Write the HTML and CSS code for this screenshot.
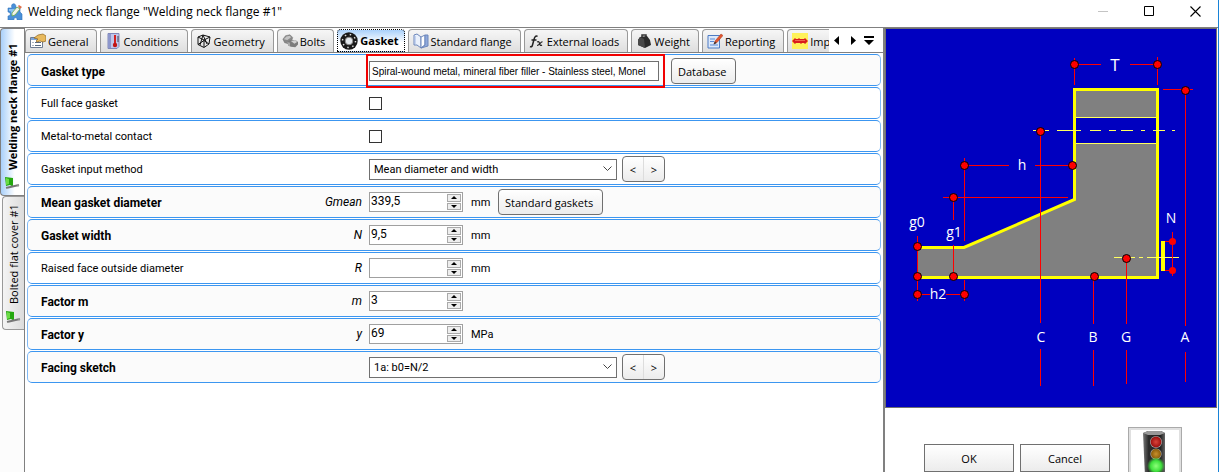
FILE: index.html
```html
<!DOCTYPE html>
<html lang="en">
<head>
    <meta charset="UTF-8">
    <meta name="viewport" content="width=device-width, initial-scale=1.0">
    <title>Welding neck flange</title>
    <link rel="stylesheet" href="styles.css">
</head>
<body>
<div class="window">

    <header class="titlebar">
        <svg class="app-icon" viewBox="0 0 16 17">
            <path d="M1 5h4c-2-5 4-6 4-1v1h4v4l2 2v6h-5c1-3-4-3-3 0H1v-4c3 0 3-4 0-4z" fill="#4a90d8" stroke="#2f74bd" stroke-width=".6"/>
            <path d="M2 6h9l-2 5-4 1c-1-2 0-4-3-4z" fill="#8cc2f2"/>
            <path d="M5 10l5-6 3 2-5 6-3 1z" fill="#f3f3e8" stroke="#6aa84a" stroke-width=".8"/>
            <path d="M11 3l1-1 3 2-2 2z" fill="#e0704a"/>
        </svg>
        <span class="title">Welding neck flange "Welding neck flange #1"</span>
        <div class="window-buttons">
            <button class="win-btn" aria-label="Minimize" disabled><svg viewBox="0 0 11 11"><path d="M0 5.500h10" stroke="#c4c4c4"/></svg></button>
            <button class="win-btn" aria-label="Maximize"><svg viewBox="0 0 11 11"><path d="M.5.5h9v9h-9z" fill="none" stroke="#000"/></svg></button>
            <button class="win-btn" aria-label="Close"><svg viewBox="0 0 11 11"><path d="M.5.5l10 10M10.500.5l-10 10" stroke="#000" stroke-width="1.100"/></svg></button>
        </div>
    </header>

    <main class="main">
        <nav class="side-tabs">
            <button class="side-tab active">
                <svg class="flag" viewBox="0 0 16 14"><path d="M1 1l8 1v9l-3-2-4 1z" fill="#25a80f"/><path d="M2 2l3 1v5l-3 1z" fill="#6bdc45"/><path d="M2 12l13-3" stroke="#777" stroke-width="1.800"/><path d="M3 12v1M14 8v3" stroke="#aaa"/></svg>
                <span>Welding neck flange #1</span>
            </button>
            <button class="side-tab">
                <svg class="flag" viewBox="0 0 16 14"><path d="M1 1l8 1v9l-3-2-4 1z" fill="#25a80f"/><path d="M2 2l3 1v5l-3 1z" fill="#6bdc45"/><path d="M2 12l13-3" stroke="#777" stroke-width="1.800"/><path d="M3 12v1M14 8v3" stroke="#aaa"/></svg>
                <span>Bolted flat cover #1</span>
            </button>
        </nav>

        <section class="editor">
            <div class="tab-bar">
                <div class="tabs">
                    <button class="tab">
                        <svg viewBox="0 0 16 16"><path d="M.5 4.500h12v10H.5z" fill="#fff" stroke="#6d7c93"/><path d="M1 5h11v2H1z" fill="#7ea6da"/><path d="M2.500 9.500h1M2.500 12.500h1M5 9.500h6M5 12.500h6" stroke="#5a6a80"/><path d="M4 5l4-3 5-1 3 2v5l-3 1-3-1-3 1-1-1 2-2z" fill="#e8b95c" stroke="#8d6420" stroke-width=".7"/></svg>
                        General
                    </button>
                    <button class="tab">
                        <svg viewBox="0 0 16 16"><path d="M3 .5h11v13l-2 2H3z" fill="#bfc6ea" stroke="#8088b8"/><path d="M3 1h3v14H3z" fill="#8d97cc"/><path d="M9 2h2v12H9z" fill="#d22020"/><circle cx="10" cy="12" r="2.200" fill="#c01515"/><path d="M12 4h2M12 6h2M12 8h2" stroke="#445"/></svg>
                        Conditions
                    </button>
                    <button class="tab">
                        <svg viewBox="0 0 16 16"><path d="M2 4l5-2 7 2-1 7-5 3.500-6-3zM2 4l6 3 6-3M8 7v7M7 2L4 12M2 11.500l6-4 5 3.500M7 2l4 9" fill="none" stroke="#111"/></svg>
                        Geometry
                    </button>
                    <button class="tab">
                        <svg viewBox="0 0 18 16"><path d="M1 6l3-4 5-1 3 3-1 4-4 3-4-1z" fill="#888" stroke="#666" stroke-width=".5"/><path d="M2 6l3-3 4-1 1 2-4 3z" fill="#c4c4c4"/><path d="M6 9l3-2h6l3 2v3l-3 3-5-.5L7 13z" fill="#7c7c7c"/><path d="M10 8l5-1 2 2-3 2z" fill="#d0d0d0"/><path d="M6 9l3 1v4l-2-1z" fill="#aaa"/></svg>
                        Bolts
                    </button>
                    <button class="tab active">
                        <svg class="wide" viewBox="0 0 18 18"><circle cx="9" cy="9" r="8.700" fill="#181818"/><circle cx="9" cy="9" r="6.500" fill="none" stroke="#ddd" stroke-width="1.500" stroke-dasharray="1.500 3.600"/><circle cx="9" cy="9" r="3.800" fill="#e4e9ee" stroke="#888"/></svg>
                        Gasket
                    </button>
                    <button class="tab">
                        <svg viewBox="0 0 16 16"><path d="M1 2l3-1 4 3v11l-4-3H1z" fill="#eaf1fc" stroke="#6d87bb"/><path d="M8 4l4-2v10l-4 3z" fill="#fff" stroke="#6d87bb"/><path d="M12 2h3v11l-7 2 4-3z" fill="#8fa9dc" stroke="#6d87bb"/><path d="M2 3v8" stroke="#9db5e2"/></svg>
                        Standard flange
                    </button>
                    <button class="tab">
                        <svg viewBox="0 0 16 16"><path d="M8.500 3.500C7 2 5.500 4 5 6.500L3.500 12c-.5 2-1.500 2-2.500 1.500M2.500 7h5" fill="none" stroke="#222" stroke-width="1.500"/><path d="M8 9c2-1 2 0 2.500 1.500s1 2.500 2.500 1.500M13.500 9c-2-.5-3 3.500-5.500 3.500" fill="none" stroke="#222" stroke-width="1.200"/></svg>
                        External loads
                    </button>
                    <button class="tab">
                        <svg viewBox="0 0 16 16"><path d="M6 5V2h4v3" fill="none" stroke="#333" stroke-width="1.500"/><path d="M4 4l7-1 3 4 1 5-6 3-7-3 0-5z" fill="#2b2b2b"/><path d="M4 4l4 2 1 9-7-3 0-5z" fill="#484848"/></svg>
                        Weight
                    </button>
                    <button class="tab">
                        <svg viewBox="0 0 16 16"><path d="M1 2.500h11.500V15H1z" fill="#dce9fb" stroke="#4d7bc4"/><path d="M3 6h5M3 8.500h4M3 12h8" stroke="#5b8bd6"/><path d="M7 11l1-3 6-7 2 1.500-6 7z" fill="#e2562f" stroke="#a53617" stroke-width=".5"/><path d="M6.500 11.500l1.500-3 1.500 1.500z" fill="#333"/></svg>
                        Reporting
                    </button>
                    <button class="tab">
                        <svg viewBox="0 0 16 16"><path d="M0 0h16v16H0z" fill="#fff25a"/><path d="M0 8l3-3 1 1h2l1-1 1 1h4l1-1 3 3-3 3-1-1h-2l-1 1-1-1H4l-1 1z" fill="#d91d1d"/><path d="M3 7.500h10" stroke="#f2684c"/></svg>
                        Import
                    </button>
                </div>
                <div class="tab-scroll">
                    <button aria-label="Previous tab"><svg viewBox="0 0 10 10"><path d="M7 0v9L2 4.500z"/></svg></button>
                    <button aria-label="Next tab"><svg viewBox="0 0 10 10"><path d="M3 0v9l5-4.500z"/></svg></button>
                    <button aria-label="All tabs"><svg viewBox="0 0 10 10"><path d="M0 0h10v2H0zM0 4h10L5 9z"/></svg></button>
                </div>
            </div>

            <form class="rows">
                <div class="row required">
                    <label for="type">Gasket type</label>
                    <span class="symbol"></span>
                    <div class="field">
                        <div class="highlight"><input class="text-box" id="type" type="text" value="Spiral-wound metal, mineral fiber filler - Stainless steel, Monel"></div>
                        <button type="button" class="btn">Database</button>
                    </div>
                </div>
                <div class="row">
                    <label for="fullface">Full face gasket</label>
                    <span class="symbol"></span>
                    <div class="field"><input class="check" id="fullface" type="checkbox"></div>
                </div>
                <div class="row">
                    <label for="metal">Metal-to-metal contact</label>
                    <span class="symbol"></span>
                    <div class="field"><input class="check" id="metal" type="checkbox"></div>
                </div>
                <div class="row">
                    <label for="method">Gasket input method</label>
                    <span class="symbol"></span>
                    <div class="field">
                        <select class="combo" id="method"><option>Mean diameter and width</option></select>
                        <div class="pager"><button type="button">&lt;</button><button type="button">&gt;</button></div>
                    </div>
                </div>
                <div class="row required">
                    <label for="gmean">Mean gasket diameter</label>
                    <span class="symbol">Gmean</span>
                    <div class="field">
                        <div class="spin"><input id="gmean" type="text" value="339,5"><div class="arrows"><button type="button" class="up" aria-label="Up"></button><button type="button" class="down" aria-label="Down"></button></div></div>
                        <span class="unit">mm</span>
                        <button type="button" class="btn">Standard gaskets</button>
                    </div>
                </div>
                <div class="row required">
                    <label for="width">Gasket width</label>
                    <span class="symbol">N</span>
                    <div class="field">
                        <div class="spin"><input id="width" type="text" value="9,5"><div class="arrows"><button type="button" class="up" aria-label="Up"></button><button type="button" class="down" aria-label="Down"></button></div></div>
                        <span class="unit">mm</span>
                    </div>
                </div>
                <div class="row">
                    <label for="raised">Raised face outside diameter</label>
                    <span class="symbol">R</span>
                    <div class="field">
                        <div class="spin"><input id="raised" type="text" value=""><div class="arrows"><button type="button" class="up" aria-label="Up"></button><button type="button" class="down" aria-label="Down"></button></div></div>
                        <span class="unit">mm</span>
                    </div>
                </div>
                <div class="row required">
                    <label for="factorm">Factor m</label>
                    <span class="symbol">m</span>
                    <div class="field">
                        <div class="spin"><input id="factorm" type="text" value="3"><div class="arrows"><button type="button" class="up" aria-label="Up"></button><button type="button" class="down" aria-label="Down"></button></div></div>
                    </div>
                </div>
                <div class="row required">
                    <label for="factory">Factor y</label>
                    <span class="symbol">y</span>
                    <div class="field">
                        <div class="spin"><input id="factory" type="text" value="69"><div class="arrows"><button type="button" class="up" aria-label="Up"></button><button type="button" class="down" aria-label="Down"></button></div></div>
                        <span class="unit">MPa</span>
                    </div>
                </div>
                <div class="row required">
                    <label for="sketch">Facing sketch</label>
                    <span class="symbol"></span>
                    <div class="field">
                        <select class="combo" id="sketch"><option>1a: b0=N/2</option></select>
                        <div class="pager"><button type="button">&lt;</button><button type="button">&gt;</button></div>
                    </div>
                </div>
            </form>
        </section>

        <aside class="preview">
            <svg class="drawing" viewBox="886 29 330 378">
                <!-- flange body and bolt hole -->
                <path d="M917 248H964L1074 200V90H1157V277H917z" fill="#808080"/>
                <path d="M1075 118h82v25h-82z" fill="#0000c0"/>
                <path d="M1075 117.500h82M1075 143.500h82" stroke="#ffff60"/>
                <path d="M918 247.500H964L1074.500 199.500V89.500H1157.500V277.500H918" fill="none" stroke="#ff0" stroke-width="3"/>
                <path d="M1161 241h4v30h-4z" fill="#ff0"/>
                <!-- axes -->
                <path d="M1033 130.500h3M1045 130.500h4M1057 130.500h24M1090 130.500h11M1109 130.500h7M1121 130.500h12M1141 130.500h4M1153 130.500h12M1172 130.500h3M1114 257.500h8M1130 257.500h5M1139 257.500h4M1147 257.500h32" stroke="#ffff60"/>
                <!-- dimension lines -->
                <path class="dim" d="M1074.500 58v27M1157.500 57v28M1078 64.500h23M1130 64.500h24M1163 89.500h30M1185.500 90v236M1185.500 352v30M1040.500 131v192M1040.500 349v37M964.500 158v83M964.500 280v21M968 165.500h41M1035 165.500h35M943 197.500h125M953.500 200v20M953.500 245v31M917.500 236v65M921 294.500h9M946 294.500h15M1093.500 280v44M1093.500 350v36M1126.500 258v66M1126.500 350v34M1172.500 232v44M1165 241.500h7M1165 270.500h7"/>
                <g class="dots">
                    <circle cx="1074.500" cy="64.500" r="4"/><circle cx="1157.500" cy="64.500" r="4"/>
                    <circle cx="1185.500" cy="90.500" r="4"/><circle cx="1040.500" cy="131.500" r="4"/>
                    <circle cx="964.500" cy="165.500" r="4"/><circle cx="1072.500" cy="165.500" r="4"/>
                    <circle cx="953.500" cy="197.500" r="4"/><circle cx="917.500" cy="246.500" r="4"/>
                    <circle cx="917.500" cy="276.500" r="4"/><circle cx="953.500" cy="276.500" r="4"/>
                    <circle cx="917.500" cy="294.500" r="4"/><circle cx="964.500" cy="294.500" r="4"/>
                    <circle cx="1094.500" cy="276.500" r="4"/><circle cx="1126.500" cy="258.500" r="4"/>
                </g>
                <circle cx="1172.500" cy="241.500" r="3.500" fill="#f00"/><circle cx="1172.500" cy="270.500" r="3.500" fill="#f00"/>
                <g class="marks">
                    <text class="big" x="1115" y="71">T</text>
                    <text x="1022" y="170">h</text>
                    <text x="917" y="227">g0</text>
                    <text x="954" y="237">g1</text>
                    <text x="938" y="299">h2</text>
                    <text x="1171" y="223">N</text>
                    <text x="1041" y="342">C</text>
                    <text x="1093" y="342">B</text>
                    <text x="1126" y="342">G</text>
                    <text x="1185" y="342">A</text>
                </g>
            </svg>
            <div class="actions">
                <button class="dialog-btn">OK</button>
                <button class="dialog-btn">Cancel</button>
                <div class="status">
                    <svg viewBox="0 0 28 50">
                        <defs>
                            <linearGradient id="shell"><stop offset="0" stop-color="#777"/><stop offset=".25" stop-color="#2c2c2c"/><stop offset=".8" stop-color="#222"/><stop offset="1" stop-color="#666"/></linearGradient>
                            <radialGradient id="red"><stop offset="0" stop-color="#d8443a"/><stop offset="1" stop-color="#9a0e0e"/></radialGradient>
                            <radialGradient id="amber"><stop offset="0" stop-color="#c8902c"/><stop offset="1" stop-color="#8a5a08"/></radialGradient>
                            <radialGradient id="green"><stop offset="0" stop-color="#8dff7a"/><stop offset=".6" stop-color="#3ee03c"/><stop offset="1" stop-color="#3ee03c" stop-opacity="0"/></radialGradient>
                        </defs>
                        <path d="M2 5l5-2h13l4 2v44H4z" fill="url(#shell)"/>
                        <path d="M2 5l5-2h13l4 2-5 2H7z" fill="#999"/>
                        <circle cx="15" cy="14" r="6" fill="#aaa"/><circle cx="15" cy="14" r="5.400" fill="url(#red)"/>
                        <circle cx="15" cy="26" r="5.600" fill="#aaa"/><circle cx="15" cy="26" r="5" fill="url(#amber)"/>
                        <circle cx="15" cy="38" r="9" fill="url(#green)"/>
                    </svg>
                </div>
            </div>
        </aside>
    </main>
</div>
</body>
</html>
```
FILE: styles.css
```css
* {
    box-sizing: border-box;
}

body {
    margin: 0;
    background: #fff;
    color: #000;
    font-family: "Open Sans", sans-serif;
    font-size: 11px;
    overflow: hidden;
}

button, input, select {
    font: inherit;
    color: inherit;
    margin: 0;
}

button {
    padding: 0;
}

svg {
    display: block;
    flex: none;
}

.window {
    display: flex;
    flex-direction: column;
    min-height: 100vh;
    border-right: 1px solid #1883d7;
}

/* title bar */
.titlebar {
    display: flex;
    align-items: center;
    height: 28px;
    padding: 0 0 4px 7px;
    border-bottom: 1px solid #808080;
}

.app-icon {
    width: 16px;
    height: 17px;
    margin-right: 5px;
}

.title {
    flex: 1;
    font-size: 12px;
}

.window-buttons {
    display: flex;
}

.win-btn {
    display: flex;
    justify-content: center;
    align-items: center;
    width: 46px;
    height: 22px;
    border: none;
    background: none;
}

.win-btn svg {
    width: 11px;
    height: 11px;
}

/* layout */
.main {
    flex: 1;
    display: grid;
    grid-template-columns: 25px minmax(0, 1fr) 335px;
}

.side-tabs {
    display: flex;
    flex-direction: column;
    align-items: flex-end;
    background: #fcfcfc;
    border-right: 1px solid #808080;
}

.side-tab {
    display: flex;
    align-items: center;
    gap: 6px;
    width: 22px;
    height: 134px;
    padding: 5px 2px;
    writing-mode: vertical-rl;
    transform: rotate(180deg);
    border: 1px solid #999;
    border-left: none;
    border-radius: 0 4px 4px 0;
    background: linear-gradient(to left, #f4f4f4, #dcdcdc);
    white-space: nowrap;
}

.side-tab.active {
    width: 24px;
    height: 168px;
    border-color: #808080;
    background: linear-gradient(to left, #a9d0fa, #fff 60%);
    font-weight: bold;
}

.flag {
    width: 16px;
    height: 14px;
    transform: rotate(180deg);
}

.editor {
    min-width: 0;
}

/* tabs */
.tab-bar {
    display: flex;
    height: 25px;
    padding-top: 1px;
    border-bottom: 1px solid #808080;
}

.tabs {
    flex: 1;
    display: flex;
    gap: 3px;
    min-width: 0;
    overflow: hidden;
}

.tab {
    flex: none;
    display: flex;
    align-items: center;
    gap: 2px;
    padding: 0 8px 0 4px;
    border: 1px solid #999;
    border-bottom: none;
    border-radius: 4px 4px 0 0;
    background: linear-gradient(#f6f6f6, #dedede);
    white-space: nowrap;
}

.tab svg {
    width: 16px;
    height: 16px;
}

.tab svg.wide {
    width: 18px;
    height: 18px;
}

.tab.active {
    padding: 0 5px 0 2px;
    border: 1px dotted #000;
    background: linear-gradient(#a9d0fa, #fff 60%);
    font-weight: bold;
}

.tab-scroll {
    display: flex;
    align-items: center;
    gap: 6px;
    padding: 0 9px 0 3px;
}

.tab-scroll button {
    width: 10px;
    height: 10px;
    border: none;
    background: none;
}

/* property rows */
.rows {
    display: flex;
    flex-direction: column;
    gap: 1px;
    padding: 1px 2px 0;
}

.row {
    display: grid;
    grid-template-columns: 219px 102px 1fr;
    align-items: center;
    height: 32px;
    padding-left: 13px;
    border: 1px solid #3c96f0;
    border-left-color: #7fb9f6;
    border-right-color: #7fb9f6;
    border-radius: 5px;
    font-family: Roboto, "Liberation Sans", sans-serif;
}

.row.required {
    background: #fbfbfb;
}

.row label {
    padding-top: 1px;
}

.required label {
    font-size: 12px;
    font-weight: bold;
}

.symbol {
    font-size: 12px;
    font-style: italic;
    text-align: right;
}

.field {
    display: flex;
    align-items: center;
    padding-left: 7px;
}

.highlight {
    position: relative;
    z-index: 1;
    height: 34px;
    margin: -1px 6px -1px -3px;
    padding: 5px 4px 5px 1px;
    border: 2px solid #f00000;
}

.text-box {
    display: block;
    width: 290px;
    height: 20px;
    padding: 0 2px;
    border: 1px solid #707070;
    background: #fff;
    font-family: "Liberation Sans", sans-serif;
    font-size: 10px;
}

.btn {
    height: 26px;
    padding: 0 9px 0 6px;
    border: 1px solid #707070;
    border-radius: 4px;
    background: linear-gradient(#fff, #ececec);
    font-family: "Open Sans", sans-serif;
}

.check {
    appearance: none;
    width: 13px;
    height: 13px;
    border: 1px solid #333;
    background: #fff;
}

.combo {
    appearance: none;
    width: 248px;
    height: 21px;
    padding: 0 4px;
    border: 1px solid #707070;
    border-radius: 0;
    background: #fff url("data:image/svg+xml,%3Csvg xmlns='http://www.w3.org/2000/svg' viewBox='0 0 9 6'%3E%3Cpath d='M.5.5l4 4 4-4' fill='none' stroke='%23444'/%3E%3C/svg%3E") no-repeat right 4px center / 9px 6px;
}

.pager {
    display: flex;
    height: 26px;
    margin-left: 5px;
    border: 1px solid #707070;
    border-radius: 4px;
    background: linear-gradient(#fff, #ececec);
}

.pager button {
    width: 20px;
    border: none;
    background: none;
    font-family: "Open Sans", sans-serif;
}

.pager button + button {
    width: 21px;
    border-left: 1px solid #ddd;
}

.spin {
    display: flex;
    width: 94px;
    height: 20px;
    border: 1px solid #a0a0a0;
    background: #fff;
}

.spin input {
    flex: 1;
    min-width: 0;
    padding: 0 1px 2px;
    border: none;
    background: none;
    font-size: 12px;
}

.arrows {
    display: flex;
    flex-direction: column;
    gap: 1px;
    width: 15px;
    padding: 1px 1px 1px 0;
}

.arrows button {
    flex: 1;
    display: flex;
    justify-content: center;
    align-items: center;
    border: 1px solid #aaa;
    background: #eee;
}

.arrows button::before {
    content: "";
    border: 3px solid transparent;
}

.arrows .up::before {
    border-top: none;
    border-bottom-color: #000;
}

.arrows .down::before {
    border-bottom: none;
    border-top-color: #000;
}

.unit {
    width: 27px;
    margin-left: 8px;
}

/* preview */
.preview {
    border-left: 2px solid #808080;
    padding-right: 1px;
}

.drawing {
    width: 100%;
    border: 1px solid #707070;
    background: #0000c0;
}

.dim {
    fill: none;
    stroke: #f00;
    shape-rendering: crispEdges;
}

.dots {
    fill: #f00;
    stroke: #000;
}

.marks {
    fill: #fff;
    font-family: "Open Sans", sans-serif;
    font-size: 14px;
    text-anchor: middle;
}

.marks .big {
    font-size: 17px;
}

.actions {
    display: flex;
    justify-content: flex-end;
    gap: 6px;
    height: 64px;
    padding: 19px 35px 0 0;
    overflow: hidden;
}

.dialog-btn {
    width: 90px;
    height: 28px;
    margin-top: 17px;
    border: 1px solid #707070;
    background: linear-gradient(#fff, #ececec);
}

.status {
    display: flex;
    justify-content: center;
    width: 54px;
    height: 54px;
    margin-left: 12px;
    border: 1px solid #aaa;
    outline: 2px solid #e0e0e0;
    outline-offset: -3px;
}

.status svg {
    width: 28px;
    height: 50px;
}
```
